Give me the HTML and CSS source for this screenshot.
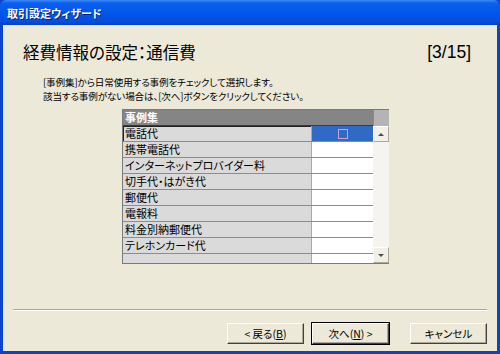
FILE: index.html
```html
<!DOCTYPE html>
<html lang="ja">
<head>
  <meta charset="UTF-8">
  <title>取引設定ウィザード</title>
  <link rel="stylesheet" href="styles.css">
</head>
<body>
  <div class="window">
    <div class="titlebar">取引設定ウィザード</div>
    <div class="content">
      <div class="heading">
        <h1>経費情報の設定：通信費</h1>
        <span class="step">[3/15]</span>
      </div>
      <p class="desc">
        [事例集]から日常使用する事例をチェックして選択します。<br>
        該当する事例がない場合は、[次へ]ボタンをクリックしてください。
      </p>

      <div class="grid">
        <div class="grid-main">
          <div class="grid-head">事例集</div>
          <div class="row selected">
            <div class="name">電話代</div>
            <div class="check"><span class="box"></span></div>
          </div>
          <div class="row"><div class="name">携帯電話代</div><div class="check"></div></div>
          <div class="row"><div class="name">インターネットプロバイダー料</div><div class="check"></div></div>
          <div class="row"><div class="name">切手代・はがき代</div><div class="check"></div></div>
          <div class="row"><div class="name">郵便代</div><div class="check"></div></div>
          <div class="row"><div class="name">電報料</div><div class="check"></div></div>
          <div class="row"><div class="name">料金別納郵便代</div><div class="check"></div></div>
          <div class="row"><div class="name">テレホンカード代</div><div class="check"></div></div>
          <div class="row"><div class="name"></div><div class="check"></div></div>
        </div>
        <div class="scrollbar">
          <div class="corner"></div>
          <div class="arrow up"></div>
          <div class="track"></div>
          <div class="arrow down"></div>
        </div>
      </div>

      <div class="separator"></div>

      <div class="buttons">
        <button>&lt; 戻る(<u>B</u>)</button>
        <button class="default">次へ(<u>N</u>) &gt;</button>
        <button class="cancel">キャンセル</button>
      </div>
    </div>
  </div>
</body>
</html>
```

FILE: styles.css
```css
html, body {
  margin: 0;
  padding: 0;
}
body {
  font-family: "Noto Sans CJK JP", "Liberation Sans", sans-serif;
  font-feature-settings: "palt";
  background-color: #0a48d2;
}
.window {
  width: 500px;
  height: 354px;
  display: flex;
  flex-direction: column;
  background-color: #0a44cc;
  box-sizing: border-box;
  padding: 0 3px 3px 3px;
}
.titlebar {
  height: 25px;
  margin: 0 -3px;
  padding-left: 7px;
  color: white;
  font-size: 11px;
  font-weight: bold;
  line-height: 26px;
  text-shadow: 1px 1px 0 #0a1e80;
  background: linear-gradient(#3c8cf8 0%, #0c5ff0 12%, #0257e8 50%, #0150df 85%, #0a3fbc 100%);
  border-radius: 6px 6px 0 0;
}
.content {
  flex: 1;
  background-color: #ece9d8;
  padding: 17px 10px 0 10px;
  display: flex;
  flex-direction: column;
}
.heading {
  display: flex;
  justify-content: space-between;
  align-items: center;
  height: 20px;
  padding: 0 16px 0 10px;
}
.heading h1 {
  margin: 0;
  font-size: 16.5px;
  font-weight: normal;
  color: #000;
}
.step {
  font-family: "Liberation Sans", sans-serif;
  font-size: 17.5px;
  color: #000;
}
.desc {
  margin: 13px 0 0 30px;
  font-size: 9.6px;
  line-height: 14px;
  letter-spacing: -0.15px;
  color: #000;
}
.grid {
  display: flex;
  width: 266px;
  height: 153px;
  margin: 6px 0 0 109px;
  border: 1px solid #7a7a7a;
  border-right: none;
  background-color: #fff;
}
.grid-main {
  flex: 1;
  overflow: hidden;
}
.grid-head {
  height: 15px;
  padding-left: 2px;
  line-height: 15px;
  font-size: 11px;
  font-weight: bold;
  color: #fff;
  background-color: #858585;
  border-bottom: 1px solid #3a3a3a;
}
.row {
  display: grid;
  grid-template-columns: 189px 1fr;
  height: 15px;
  border-bottom: 1px solid #8c8c8c;
  font-size: 11px;
  line-height: 15px;
}
.row .name {
  background-color: #dadada;
  border-right: 1px solid #a8a8a8;
  padding-left: 2px;
  white-space: nowrap;
  color: #000;
}
.row .check {
  background-color: #fff;
}
.row.selected .name {
  box-shadow: inset 1px 1px 0 #222;
}
.row.selected .check {
  background-color: #316ac5;
  display: flex;
  align-items: center;
  justify-content: center;
}
.box {
  width: 8px;
  height: 8px;
  border: 1px solid #c8a4d8;
}
.scrollbar {
  width: 16px;
  display: flex;
  flex-direction: column;
  background-color: #f4f3ee;
}
.corner {
  height: 16px;
  background-color: #b4b4b4;
  border-left: 1px solid #8a8a8a;
  box-sizing: border-box;
}
.arrow {
  height: 14px;
  background-color: #f1efe6;
  border: 1px solid;
  border-color: #fff #aca899 #aca899 #fff;
  display: flex;
  align-items: center;
  justify-content: center;
}
.arrow::after {
  content: "";
  border-left: 3px solid transparent;
  border-right: 3px solid transparent;
}
.arrow.up::after {
  border-bottom: 3px solid #4d4d4d;
}
.arrow.down::after {
  border-top: 3px solid #4d4d4d;
}
.track {
  flex: 1;
  background-color: #f5f4ef;
}
.separator {
  margin-top: 45px;
  height: 0;
  border-top: 1px solid #aca899;
  border-bottom: 1px solid #fff;
}
.buttons {
  display: flex;
  justify-content: flex-end;
  gap: 8px;
  margin-top: 12px;
}
button {
  width: 77px;
  height: 21px;
  padding: 0;
  font-family: "Noto Sans CJK JP", "Liberation Sans", sans-serif;
  font-feature-settings: "palt";
  font-size: 10.5px;
  color: #000;
  background-color: #ece9d8;
  border: 1px solid;
  border-color: #fff #404040 #404040 #fff;
  box-shadow: inset -1px -1px 0 #aca899;
}
button.default {
  outline: 1px solid #000;
}
button.cancel {
  margin-left: 13px;
}
```
